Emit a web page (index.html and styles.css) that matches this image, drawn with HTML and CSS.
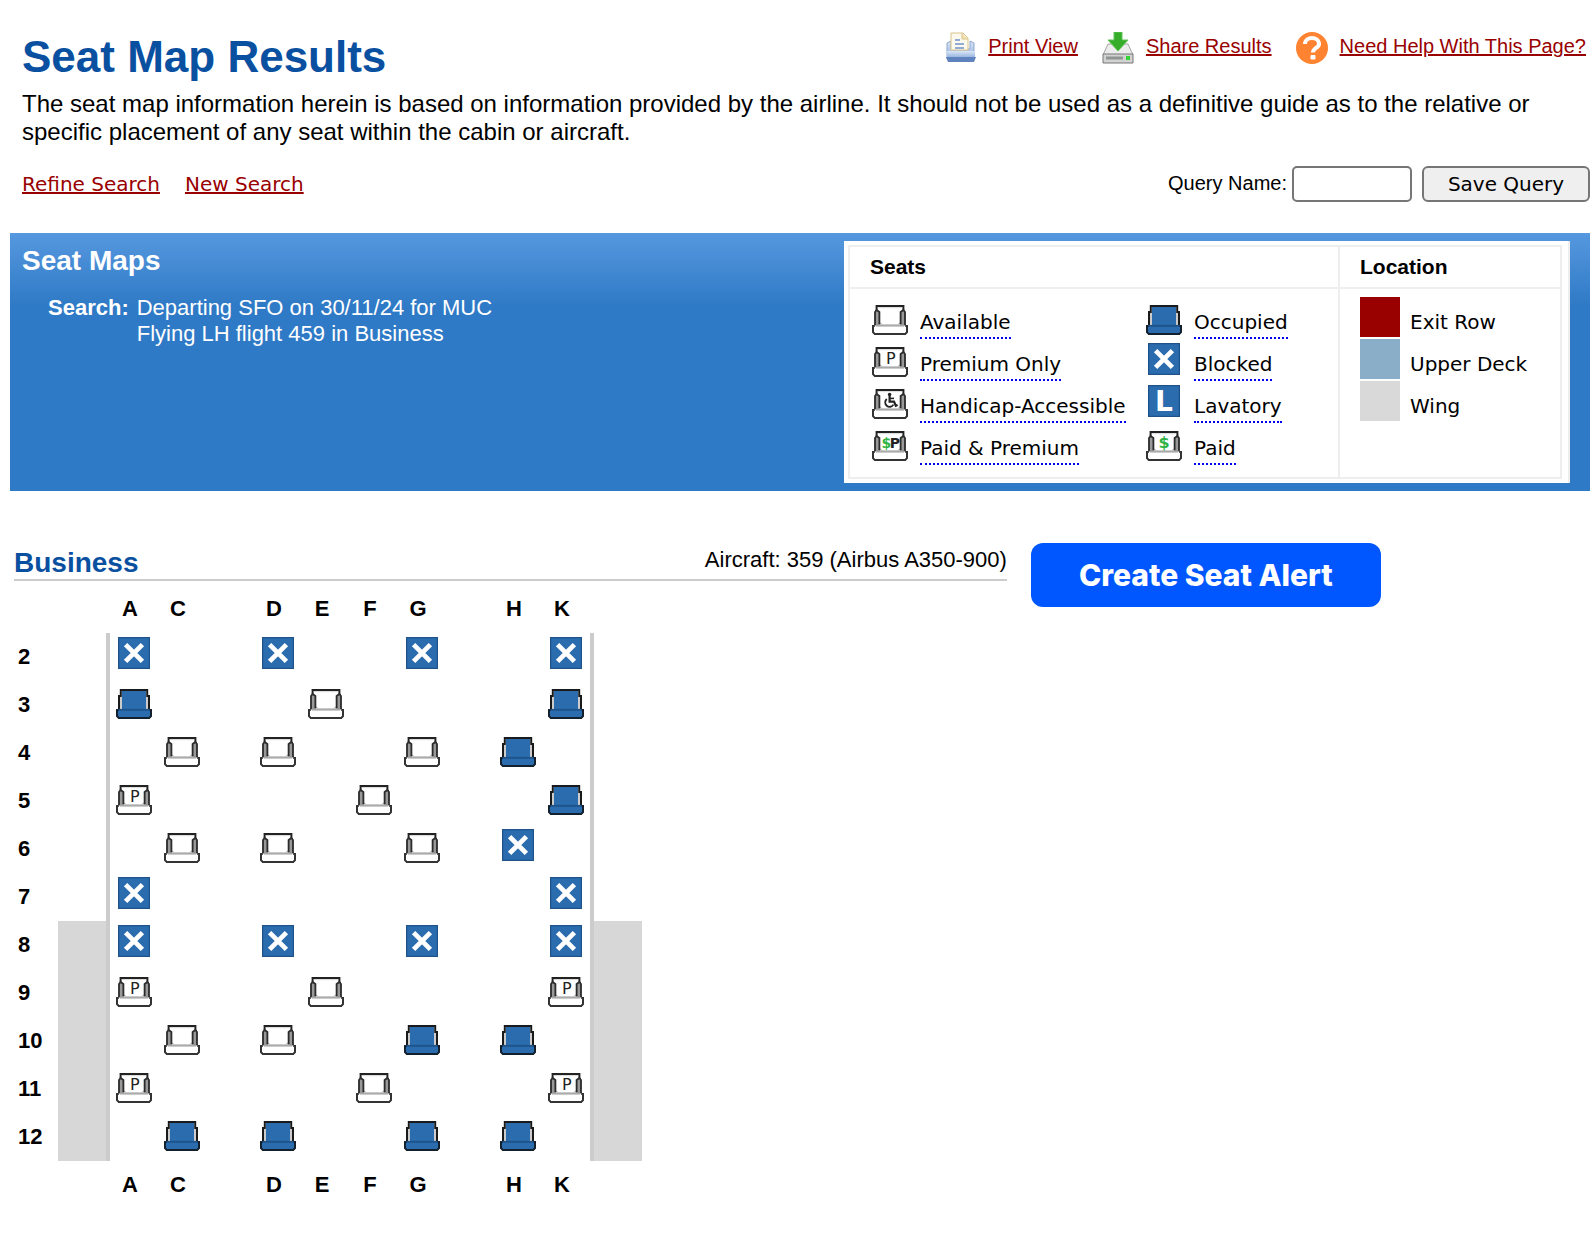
FILE: index.html
```html
<!DOCTYPE html>
<html lang="en">
<head>
  <meta charset="utf-8">
  <title>Seat Map Results</title>
  <link rel="stylesheet" href="styles.css">
</head>
<body>
  <!-- Icon shapes used by the legend and the seat map -->
  <svg class="icon-defs" aria-hidden="true">
    <symbol id="seat" viewBox="0 0 20 20">
      <path d="M3 14V4.5H17V14Z" fill="#fff"/>
      <path d="M4 5.3H16" stroke="#ddd" stroke-width=".6"/>
      <path d="M5 13L6 14H14L15 13" fill="none" stroke="#bbb" stroke-width=".7"/>
      <path d="M3.3 7V4.5H16.7V7" fill="none" stroke="#222"/>
      <path d="M2.5 14.5V7.5L3.3 6.5L4.7 7.5V13.8M17.5 14.5V7.5L16.7 6.5L15.3 7.5V13.8" fill="#999" stroke="#2b2b2b" stroke-width=".9"/>
      <path d="M2 14.2H18V18H2Z" fill="#fff"/>
      <path d="M3 14.4H17" stroke="#aaa" stroke-width=".8"/>
      <path d="M2.4 14.5H1.5V17.6L2.4 18.5H17.6L18.5 17.6V14.5H17.6" fill="none" stroke="#333"/>
    </symbol>
    <symbol id="available" viewBox="0 0 20 20">
      <use href="#seat"/>
    </symbol>
    <symbol id="premium" viewBox="0 0 20 20">
      <use href="#seat"/>
      <text class="seat-letter" x="10.4" y="12.5" font-size="8">P</text>
    </symbol>
    <symbol id="accessible" viewBox="0 0 20 20">
      <use href="#seat"/>
      <circle cx="9.8" cy="6.8" r=".9" fill="#222"/>
      <path d="M9.8 7.5V10.3H12L12.9 12.4L13.8 12" fill="none" stroke="#222" stroke-width="1.1"/>
      <path d="M9.8 8.7H12" stroke="#222" stroke-width=".8"/>
      <path d="M8.4 9A2.2 2.2 0 1 0 11.7 11.8" fill="none" stroke="#222" stroke-width=".9"/>
    </symbol>
    <symbol id="paid-premium" viewBox="0 0 20 20">
      <use href="#seat"/>
      <text class="seat-letter paid" x="8.2" y="12.5" font-size="7">$</text>
      <text class="seat-letter bold" x="12.4" y="12.5" font-size="7">P</text>
    </symbol>
    <symbol id="paid" viewBox="0 0 20 20">
      <use href="#seat"/>
      <text class="seat-letter paid" x="10" y="12.5" font-size="8">$</text>
    </symbol>
    <symbol id="occupied" viewBox="0 0 20 20">
      <path d="M3 8H17V14H3Z" fill="#ccc"/>
      <path d="M4 5H16V14.5H4Z" fill="#2a6cae"/>
      <path d="M2.5 14.5V7.5H3.4V4.5H16.6V7.5H17.5V14.5" fill="none" stroke="#1a1a1a"/>
      <path d="M1.5 14.5H18.5V17.6L17.6 18.5H2.4L1.5 17.6Z" fill="#2a6cae"/>
      <path d="M2 14.4H18" stroke="#1f5288" stroke-width=".9"/>
      <path d="M2.2 14.5H1.5V17.6L2.4 18.5H17.6L18.5 17.6V14.5H17.8" fill="none" stroke="#14202e"/>
    </symbol>
    <symbol id="blocked" viewBox="0 0 20 20">
      <rect x="2.3" y="2.3" width="15.4" height="15.4" fill="#2a6cae" stroke="#1f5288" stroke-width=".6"/>
      <path d="M5.8 5.8L14.2 14.2M14.2 5.8L5.8 14.2" stroke="#fff" stroke-width="2.4"/>
    </symbol>
    <symbol id="lavatory" viewBox="0 0 20 20">
      <rect x="2.3" y="2.3" width="15.4" height="15.4" fill="#2a6cae" stroke="#1f5288" stroke-width=".6"/>
      <text class="lavatory-letter" x="10" y="15" font-size="14">L</text>
    </symbol>
  </svg>

  <header class="page-header">
    <h1>Seat Map Results</h1>
    <nav class="toolbar">
      <a href="#" class="tool">
        <svg class="tool-icon" viewBox="0 0 32 32" aria-hidden="true">
          <defs>
            <linearGradient id="printer" x1="0" y1="0" x2="0" y2="1">
              <stop offset="0" stop-color="#dbe6f5"/>
              <stop offset="1" stop-color="#8fafdf"/>
            </linearGradient>
          </defs>
          <path d="M3 11L7 9V17H26V9L30 11V27H3Z" fill="url(#printer)" stroke="#8fa6cc"/>
          <path d="M7 1H19L24 6V18H7Z" fill="#fbf8ec" stroke="#d8c48c"/>
          <path d="M18 1V7H24" fill="#f3e3b0" stroke="#d8c48c"/>
          <path d="M11 8H16M11 12H20M11 16H20" stroke="#90abd8" stroke-width="2"/>
          <path d="M3 19H31V26H3Z" fill="url(#printer)"/>
          <path d="M2 25H32L30 30H4Z" fill="#5f83bf"/>
        </svg>
        <span>Print View</span>
      </a>
      <a href="#" class="tool">
        <svg class="tool-icon" viewBox="0 0 32 32" aria-hidden="true">
          <path d="M6 12H26L31 23H1Z" fill="#ececec" stroke="#a5a5a5"/>
          <path d="M1 22H31V31H1Z" fill="#d2d2d2" stroke="#777"/>
          <path d="M4 26H21" stroke="#8f9593" stroke-width="3"/>
          <rect x="24" y="24" width="4" height="4" fill="#35d435"/>
          <path d="M12 0H20V8H26L16 19L6 8H12Z" fill="#35ad2b" stroke="#5fc454"/>
        </svg>
        <span>Share Results</span>
      </a>
      <a href="#" class="tool">
        <svg class="tool-icon" viewBox="0 0 32 32" aria-hidden="true">
          <circle cx="16" cy="16" r="16" fill="#ff8330"/>
          <path d="M9 12C9 4 23 4 23 12C23 16 17 16 17 20.5" fill="none" stroke="#fff" stroke-width="4"/>
          <rect x="14.5" y="23" width="5" height="4.5" rx="1" fill="#fff"/>
        </svg>
        <span>Need Help With This Page?</span>
      </a>
    </nav>
  </header>

  <p class="disclaimer">The seat map information herein is based on information provided by the airline. It should not be used as a definitive guide as to the relative or specific placement of any seat within the cabin or aircraft.</p>

  <div class="search-bar">
    <div class="search-links">
      <a href="#">Refine Search</a>
      <a href="#">New Search</a>
    </div>
    <form class="query-form">
      <label for="queryName">Query Name:</label>
      <input type="text" id="queryName">
      <button type="button" class="save-button">Save Query</button>
    </form>
  </div>

  <section class="summary">
    <div class="summary-text">
      <h2>Seat Maps</h2>
      <div class="search-details">
        <strong>Search:</strong>
        <div>Departing SFO on 30/11/24 for MUC<br>Flying LH flight 459 in Business</div>
      </div>
    </div>

    <div class="legend">
      <div class="legend-group seats">
        <h3>Seats</h3>
        <div class="legend-body">
          <ul>
            <li><svg class="seat-icon"><use href="#available"/></svg><span class="term">Available</span></li>
            <li><svg class="seat-icon"><use href="#premium"/></svg><span class="term">Premium Only</span></li>
            <li><svg class="seat-icon"><use href="#accessible"/></svg><span class="term">Handicap-Accessible</span></li>
            <li><svg class="seat-icon"><use href="#paid-premium"/></svg><span class="term">Paid &amp; Premium</span></li>
          </ul>
          <ul>
            <li><svg class="seat-icon"><use href="#occupied"/></svg><span class="term">Occupied</span></li>
            <li><svg class="seat-icon"><use href="#blocked"/></svg><span class="term">Blocked</span></li>
            <li><svg class="seat-icon"><use href="#lavatory"/></svg><span class="term">Lavatory</span></li>
            <li><svg class="seat-icon"><use href="#paid"/></svg><span class="term">Paid</span></li>
          </ul>
        </div>
      </div>
      <div class="legend-group location">
        <h3>Location</h3>
        <div class="legend-body">
          <ul>
            <li><i class="swatch exit-row"></i><span>Exit Row</span></li>
            <li><i class="swatch upper-deck"></i><span>Upper Deck</span></li>
            <li><i class="swatch wing-area"></i><span>Wing</span></li>
          </ul>
        </div>
      </div>
    </div>
  </section>

  <main class="cabin">
    <div class="cabin-map">
      <div class="cabin-header">
        <h2>Business</h2>
        <span class="aircraft">Aircraft: 359 (Airbus A350-900)</span>
      </div>
      <table class="seat-map">
        <thead></thead>
        <tbody></tbody>
        <tfoot></tfoot>
      </table>
    </div>
    <button type="button" class="alert-button">Create Seat Alert</button>
  </main>

  <script>
    // A space is an aisle
    var columns = 'AC DEFG HK';
    var firstWingRow = 8;

    // One letter per column: X blocked, O occupied, S available, P premium
    var rows = {
      2:  'X..X..X..X',
      3:  'O...S....O',
      4:  '.S.S..S.O.',
      5:  'P....S...O',
      6:  '.S.S..S.X.',
      7:  'X........X',
      8:  'X..X..X..X',
      9:  'P...S....P',
      10: '.S.S..O.O.',
      11: 'P....S...P',
      12: '.O.O..O.O.'
    };
    var icons = { X: 'blocked', O: 'occupied', S: 'available', P: 'premium' };

    function letterRow() {
      var html = '<tr><td></td><td></td>';
      for (var i = 0; i < columns.length; i++) {
        html += '<th class="letter">' + columns[i] + '</th>';
      }
      return html + '<td></td></tr>';
    }

    function seatRow(number) {
      var wing = number >= firstWingRow ? ' wing' : '';
      var html = '<tr><th class="row-number">' + number + '</th><td class="side left' + wing + '"></td>';
      for (var i = 0; i < rows[number].length; i++) {
        var icon = icons[rows[number][i]];
        html += '<td class="seat">' + (icon ? '<svg class="seat-icon"><use href="#' + icon + '"/></svg>' : '') + '</td>';
      }
      return html + '<td class="side right' + wing + '"></td></tr>';
    }

    document.querySelector('.seat-map thead').innerHTML = letterRow();
    document.querySelector('.seat-map tbody').innerHTML = Object.keys(rows).map(seatRow).join('');
    document.querySelector('.seat-map tfoot').innerHTML = letterRow();
  </script>
</body>
</html>
```
FILE: styles.css
```css
* {
  box-sizing: border-box;
}

/* Body Styling */
body {
  margin: 0;
  background-color: #fff;
  color: #000;
  font-family: Arial, "Liberation Sans", sans-serif;
  font-size: 20px;
}

h1, h2, h3, p, ul {
  margin: 0;
  padding: 0;
}

a {
  color: #990000;
}

.icon-defs {
  display: none;
}

/* Page Header Styling */
.page-header {
  display: flex;
  justify-content: space-between;
  padding: 32px 10px 0 22px;
}

.page-header h1 {
  color: #0a50a1;
  font-size: 44px;
  line-height: 50px;
}

.toolbar {
  display: flex;
  gap: 24px;
}

.tool {
  display: flex;
  align-items: flex-start;
  gap: 12px;
  line-height: 28px;
}

.tool-icon {
  width: 32px;
  height: 32px;
}

.disclaimer {
  margin: 8px 22px 0;
  font-size: 24px;
  line-height: 28px;
}

/* Search Bar Styling */
.search-bar {
  display: flex;
  justify-content: space-between;
  align-items: center;
  margin: 20px 6px 0 22px;
}

.search-links {
  display: flex;
  gap: 25px;
  font-family: Verdana, "DejaVu Sans", sans-serif;
}

.query-form {
  display: flex;
  align-items: center;
}

.query-form label {
  padding-bottom: 2px;
}

.query-form input {
  width: 120px;
  height: 36px;
  margin: 0 10px 0 5px;
  border: 2px solid #767676;
  border-radius: 5px;
  font-size: 20px;
}

.save-button {
  width: 168px;
  height: 36px;
  padding: 0;
  border: 2px solid #767676;
  border-radius: 6px;
  background-color: #efefef;
  color: #000;
  font-family: Verdana, "DejaVu Sans", sans-serif;
  font-size: 20px;
}

/* Summary Styling */
.summary {
  display: flex;
  justify-content: space-between;
  margin: 31px 6px 0 10px;
  padding: 8px 20px 8px 12px;
  background: #2f7ac6 linear-gradient(#5698df, #2f7ac6) no-repeat;
  background-size: 100% 72px;
  color: #fff;
}

.summary-text {
  padding-top: 4px;
}

.summary h2 {
  font-size: 28px;
  line-height: 32px;
}

.search-details {
  display: flex;
  gap: 8px;
  margin: 18px 0 0 26px;
  font-size: 22px;
  line-height: 26px;
}

/* Legend Styling */
.legend {
  display: flex;
  padding: 4px 6px 4px 4px;
  border-right: 2px solid #eee;
  background-color: #fff;
  color: #000;
}

.legend-group {
  border: 2px solid #eee;
}

.legend-group.seats {
  width: 490px;
  border-right: none;
}

.legend-group.location {
  width: 224px;
}

.legend-group h3 {
  padding-left: 20px;
  border-bottom: 2px solid #eee;
  font-size: 21px;
  line-height: 40px;
}

.legend-body {
  display: grid;
  grid-template-columns: 274px auto;
  padding: 8px 0 12px 20px;
  font-family: Verdana, "DejaVu Sans", sans-serif;
  line-height: 24px;
}

.location .legend-body {
  grid-template-columns: auto;
}

.legend-body li {
  display: flex;
  gap: 10px;
  height: 42px;
}

.legend-body li span {
  align-self: flex-end;
  padding-bottom: 3px;
  border-bottom: 2px dotted transparent;
}

.legend-body li .term {
  border-bottom-color: #0000ee;
}

.swatch {
  width: 40px;
  height: 40px;
}

.exit-row {
  background-color: #990000;
}

.upper-deck {
  background-color: #8aadc8;
}

.wing-area {
  background-color: #d9d9d9;
}

/* Seat Icon Styling */
.seat-icon {
  display: block;
  width: 40px;
  height: 40px;
}

.seat-letter {
  fill: #222;
  font-family: Verdana, "DejaVu Sans", sans-serif;
  text-anchor: middle;
}

.seat-letter.bold {
  font-weight: bold;
}

.seat-letter.paid {
  fill: #2fb344;
  font-weight: bold;
}

.lavatory-letter {
  fill: #fff;
  font-family: Verdana, "DejaVu Sans", sans-serif;
  font-weight: bold;
  text-anchor: middle;
}

/* Cabin Styling */
.cabin {
  display: flex;
  align-items: flex-start;
  gap: 24px;
  margin: 52px 6px 0 14px;
}

.cabin-map {
  width: 63%;
  padding-top: 4px;
}

.cabin-header {
  display: flex;
  justify-content: space-between;
  border-bottom: 2px solid #ccc;
}

.cabin-header h2 {
  color: #0a50a1;
  font-size: 28px;
  line-height: 32px;
}

.aircraft {
  font-size: 22px;
  line-height: 26px;
}

/* Seat Map Styling */
.seat-map {
  margin-top: 4px;
  border-spacing: 0;
  table-layout: fixed;
  width: 628px;
  font-size: 22px;
}

.seat-map tr {
  height: 48px;
}

.seat-map th,
.seat-map td {
  padding: 0;
}

.seat-map th:first-child,
.seat-map td:first-child {
  width: 44px;
}

.seat-map td:nth-child(2),
.seat-map td:last-child {
  width: 52px;
}

.seat-map .letter {
  padding-right: 8px;
}

.seat-map .row-number {
  padding-left: 4px;
  text-align: left;
}

.seat-map .seat {
  padding-left: 4px;
  vertical-align: top;
}

.side.left {
  border-right: 4px solid #ccc;
}

.side.right {
  border-left: 4px solid #ccc;
}

.wing {
  background-color: #d7d7d7;
}

/* Alert Button Styling */
.alert-button {
  width: 350px;
  height: 64px;
  border: none;
  border-radius: 12px;
  background-color: #0057ff;
  color: #fff;
  font-family: Inter, sans-serif;
  font-size: 30px;
  font-weight: 800;
  cursor: pointer;
}
```
